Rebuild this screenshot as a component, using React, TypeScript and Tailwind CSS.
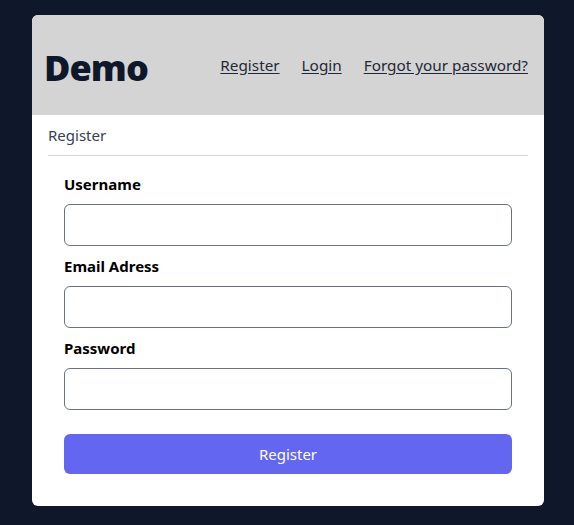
import React from "react";

const Field: React.FC<{ label: string; type?: string }> = ({ label, type = "text" }) => (
  <div className="flex flex-col">
    <label className="mb-[9px] text-[15px] font-bold leading-[22px] text-black">{label}</label>
    <input
      type={type}
      className="h-[42px] w-full rounded-md border border-gray-500 bg-white px-3 outline-none"
    />
  </div>
);

export default function App() {
  return (
    <div
      className="min-h-screen bg-[#0f172a] pt-[15px]"
      style={{ fontFamily: '"Noto Sans", "Open Sans", sans-serif' }}
    >
      <div className="ml-[32px] w-[512px] overflow-hidden rounded-md bg-white">
        <header className="flex h-[100px] items-center justify-between bg-[#d4d4d4] pl-[12px] pr-4">
          <h1 className="pt-[6px] text-[36px] font-black leading-none tracking-tight text-[#0f172a]">Demo</h1>
          <nav className="flex items-center gap-[22px] text-[15.3px] text-[#1f2937]">
            <a href="#" className="underline underline-offset-2">Register</a>
            <a href="#" className="underline underline-offset-2">Login</a>
            <a href="#" className="underline underline-offset-2">Forgot your password?</a>
          </nav>
        </header>
        <div className="px-4">
          <div className="border-b border-gray-300 pb-[9px] pt-[10px] text-[15px] leading-[21px] text-gray-700">
            Register
          </div>
        </div>
        <form className="flex flex-col gap-[9px] px-8 pt-[17px] pb-8">
          <Field label="Username" />
          <Field label="Email Adress" type="email" />
          <Field label="Password" type="password" />
          <button
            type="button"
            className="mt-[15px] h-10 w-full rounded-md bg-[#6366f1] text-[15px] text-white"
          >
            Register
          </button>
        </form>
      </div>
    </div>
  );
}
